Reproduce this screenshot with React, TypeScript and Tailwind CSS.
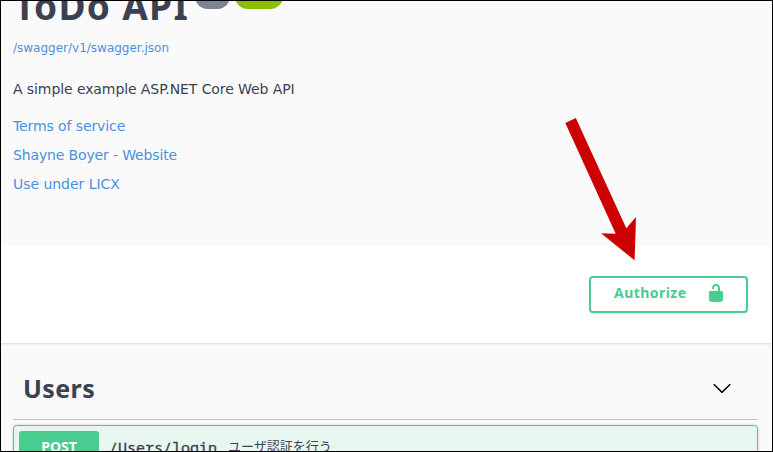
const sans = "font-['Noto_Sans','Noto_Sans_CJK_JP',sans-serif]";

function UnlockedIcon() {
  return (
    <svg viewBox="0 0 20 20" className="h-5 w-5 shrink-0" fill="#49cc90">
      <path d="M15.8 8H14V5.6C14 2.703 12.665 1 10 1 7.334 1 6 2.703 6 5.6V6h2v-.801C8 3.754 8.797 3 10 3c1.203 0 2 .754 2 2.199V8H4c-.553 0-1 .646-1 1.199V17c0 .549.428 1.139.951 1.307l1.197.387C5.672 18.861 6.55 19 7.1 19h5.8c.549 0 1.428-.139 1.951-.307l1.196-.387c.524-.167.953-.757.953-1.306V9.199C17 8.646 16.352 8 15.8 8z" />
    </svg>
  );
}

function ChevronDown() {
  return (
    <svg viewBox="0 0 20 20" className="h-5 w-5 shrink-0" fill="#000">
      <path d="M17.418 6.109c.272-.268.709-.268.979 0s.271.701 0 .969l-7.908 7.83c-.27.268-.707.268-.979 0l-7.908-7.83c-.27-.268-.27-.701 0-.969.271-.268.709-.268.979 0L10 13.25l7.418-7.141z" />
    </svg>
  );
}

function PointerArrow() {
  return (
    <svg viewBox="0 0 773 452" className="pointer-events-none absolute -left-px -top-px h-[452px] w-[773px]">
      <polygon points="565.3,123 575.8,118 626.3,228.3 636,217 634.6,260.3 601,233.3 615.7,233.8" fill="#cc0000" />
    </svg>
  );
}

export default function App() {
  return (
    <div className={`relative flex h-[452px] w-[773px] flex-col overflow-hidden border border-black bg-[#fafafa] text-[#3b4151] ${sans}`}>
      <header className="h-[245px] shrink-0 pl-3 font-['DejaVu_Sans',sans-serif]">
        <div className="-mt-[17px] flex h-[50px] items-start">
          <h1 className="-mt-[2px] w-[182px] whitespace-nowrap pl-px font-['Noto_Sans',sans-serif] text-[37px] font-bold leading-[48px] tracking-[1.3px]">ToDo API</h1>
          <span className="h-[25px] w-[35px] rounded-[14px] bg-[#7d8492]" />
          <span className="ml-[5px] h-[25px] w-[48px] rounded-[14px] bg-[#89bf04]" />
        </div>
        <a className="mt-[6px] block h-4 text-[12px] leading-4 text-[#4990e2]">/swagger/v1/swagger.json</a>
        <p className="mt-[23px] h-5 text-[14px] leading-5 tracking-[-0.09px]">A simple example ASP.NET Core Web API</p>
        <nav className="mt-[17px] flex flex-col gap-[9px] text-[14px] leading-5 tracking-[-0.1px] text-[#4990e2]">
          <a>Terms of service</a>
          <a className="tracking-[-0.14px]">Shayne Boyer - Website</a>
          <a className="tracking-[-0.04px]">Use under LICX</a>
        </nav>
      </header>
      <section className="flex h-[97px] shrink-0 justify-end bg-white pr-6 pt-[30px] shadow-[0_1px_2px_0_rgba(0,0,0,0.15)]">
        <button className="flex h-[37px] w-[159px] rounded-[4px] border-2 border-[#49cc90] pl-[23px] pt-[5px] shadow-[0_1px_2px_rgba(0,0,0,0.1)]">
          <span className="w-[92px] text-left text-[14px] font-bold leading-5 tracking-[0.45px] text-[#49cc90]">Authorize</span>
          <UnlockedIcon />
        </button>
      </section>
      <main className="pl-3 pr-[14px]">
        <div className="flex h-[77px] items-center justify-between border-b border-[#3b4151]/30 pl-[10px] pr-[26px] pt-[14px]">
          <h2 className="text-[25px] font-bold leading-8 tracking-[0.4px]">Users</h2>
          <ChevronDown />
        </div>
        <div className="mt-[5px] flex h-10 items-center rounded-[4px] border border-[#49cc90] bg-[#e8f6f0] pl-[5px] pt-[2px] shadow-[0_0_3px_rgba(0,0,0,0.19)]">
          <span className="flex h-[30px] w-[80px] items-center justify-center rounded-[3px] bg-[#49cc90] text-[14px] font-bold text-white">POST</span>
          <span className="ml-[10px] w-[119px] pt-[2px] font-['Noto_Sans_Mono','DejaVu_Sans_Mono',monospace] text-[15px] font-normal [-webkit-text-stroke:0.35px]">/Users/login</span>
          <span className="pt-px text-[13px]">ユーザ認証を行う</span>
        </div>
      </main>
      <PointerArrow />
    </div>
  );
}
